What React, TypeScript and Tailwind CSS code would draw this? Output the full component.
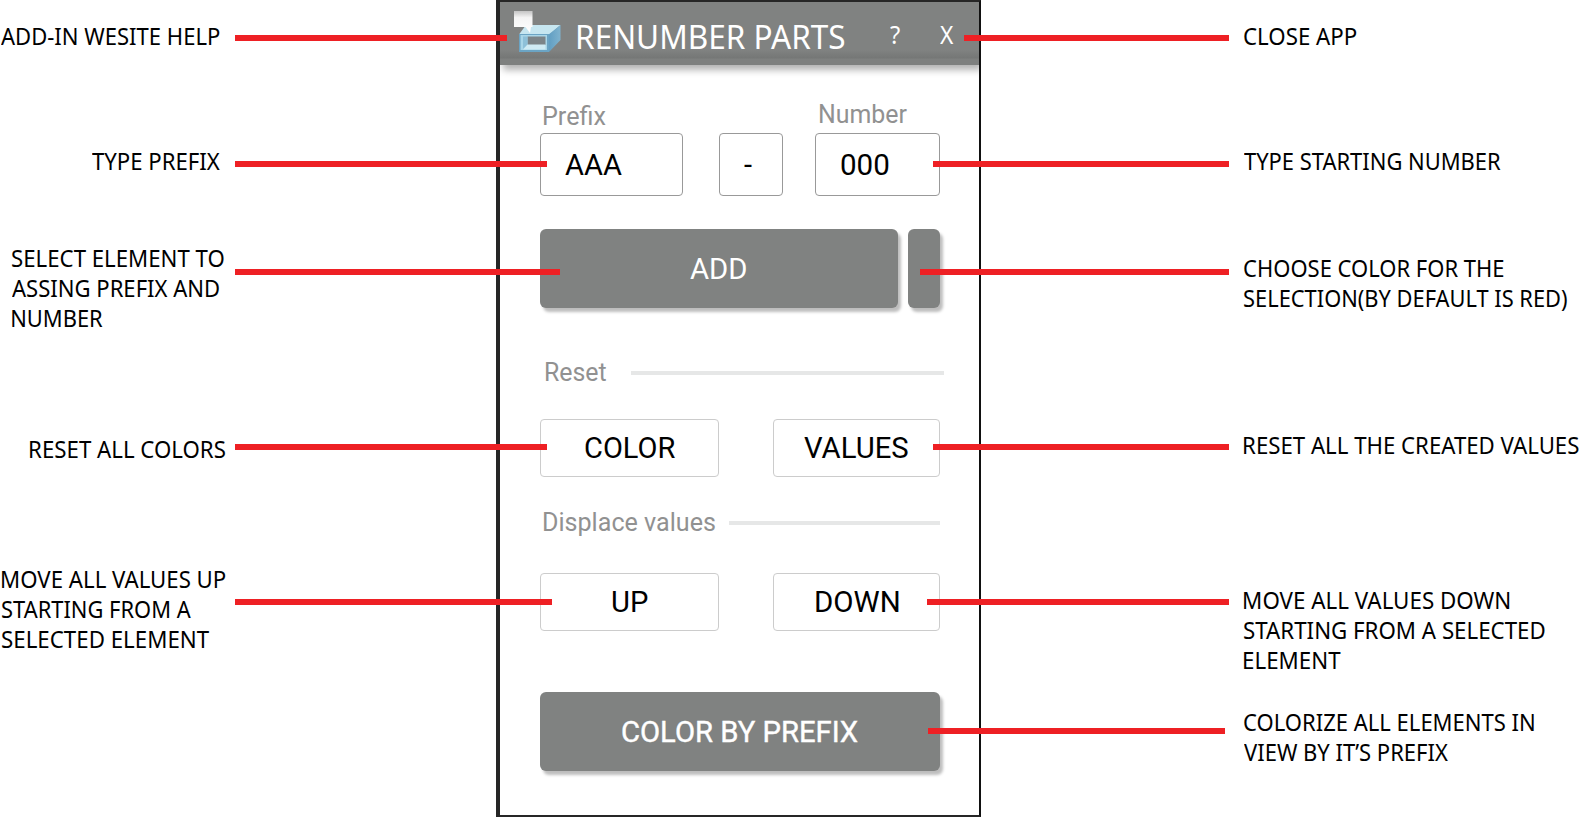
import { useLayoutEffect, useRef } from "react";
import clsx from "clsx";

const NOTO = "font-['Noto_Sans',sans-serif]";
const ROBOTO = "font-[Roboto,sans-serif]";

/** One line of text whose inked width is fitted to `width` pixels. */
function Fit({ text, width, className }: { text: string; width: number; className?: string }) {
  const ref = useRef<HTMLSpanElement>(null);
  useLayoutEffect(() => {
    const el = ref.current;
    const ctx = document.createElement("canvas").getContext("2d");
    if (!el || !ctx) return;
    const cs = getComputedStyle(el);
    ctx.font = `${cs.fontWeight} ${cs.fontSize} ${cs.fontFamily}`;
    const m = ctx.measureText(text);
    const scale = width / (m.actualBoundingBoxLeft + m.actualBoundingBoxRight);
    el.style.transform = `translateX(${m.actualBoundingBoxLeft * scale}px) scaleX(${scale})`;
  }, [text, width]);
  return (
    <span className={clsx("block h-[30px] leading-[30px] whitespace-nowrap", className)} style={{ width }}>
      <span ref={ref} className="inline-block origin-left">{text}</span>
    </span>
  );
}

type Line = [string, number];

function Note({ lines, className }: { lines: Line[]; className?: string }) {
  return (
    <div className={clsx(NOTO, "text-[23.6px] text-black", className)}>
      {lines.map(([text, width]) => (
        <Fit key={text} text={text} width={width} />
      ))}
    </div>
  );
}

function Logo() {
  return (
    <svg className="ml-[13px] mt-2 h-11 w-12 shrink-0" viewBox="0 0 48 44">
      <defs>
        <linearGradient id="bubble" x1="0" y1="0" x2="0" y2="1">
          <stop offset="0" stopColor="#c4c4c4" />
          <stop offset="0.3" stopColor="#f4f4f4" />
          <stop offset="1" stopColor="#fff" />
        </linearGradient>
        <linearGradient id="side" x1="0" y1="0" x2="1" y2="0">
          <stop offset="0" stopColor="#5f9dc2" />
          <stop offset="1" stopColor="#7fb3cf" />
        </linearGradient>
      </defs>
      <path d="M6 24.500 13 15H47.500L36 25Z" fill="#c6e6f0" />
      <path d="M35 25 47.500 15V30L36 42Z" fill="url(#side)" />
      <path d="M6 24H36V42H6Z" fill="#6ba4c4" />
      <path d="M7.500 25H34V40H7.500Z" fill="#a9d6e8" />
      <path d="M14.500 26.500H32.500V35H14.500Z" fill="#7b8488" />
      <path d="M10 26.500H14.500V35L10 39Z" fill="#8dc0d8" />
      <path d="M14.500 34.500H32.500V39.500H10Z" fill="#cfebf4" />
      <path d="M1 1H19.500V17H18L17 23 12.500 17H1Z" fill="url(#bubble)" />
    </svg>
  );
}

const outline = "flex shrink-0 items-center rounded-[4px] border bg-white text-[29px] text-black";
const solid =
  "flex h-[79px] shrink-0 items-center rounded-[6px] bg-[#808281] text-[29px] text-white shadow-[3px_4px_3px_rgba(0,0,0,0.26)]";

function Panel() {
  return (
    <main className={clsx(ROBOTO, "h-[817px] w-[485px] border-t-2 border-r-2 border-b-2 border-l-4 border-[#262626] border-r-[#111] bg-white")}>
      <header
        className={clsx(
          NOTO,
          "flex h-[63px] bg-[linear-gradient(#808281_0,#808281_48px,#757776_56px,#7e807f_57px,#7e807f_63px)] text-white shadow-[3px_5px_7px_rgba(0,0,0,0.3)] [clip-path:inset(0_0_-20px_0)]",
        )}
      >
        <Logo />
        <Fit text="RENUMBER PARTS" width={267} className="mt-[20px] ml-[17px] text-[32px]" />
        <Fit text="?" width={10} className="mt-[17px] ml-[45px] text-[26px]" />
        <Fit text="X" width={14} className="mt-[17px] ml-[40px] text-[26px]" />
      </header>

      <div className="flex pt-[34px] pl-10">
        <label className="mr-9 flex w-[143px] flex-col">
          <Fit text="Prefix" width={61.5} className="mt-[3px] mb-px ml-[4px] text-[25px] text-[#919191]" />
          <span className={clsx(outline, "h-[63px] border-[#999] pl-6")}>
            <Fit text="AAA" width={57} />
          </span>
        </label>
        <span className={clsx(outline, "mt-[34px] mr-8 h-[63px] w-16 border-[#999] pl-6")}>
          <Fit text="-" width={8} />
        </span>
        <label className="flex w-[125px] flex-col">
          <Fit text="Number" width={87.5} className="mt-px mb-[3px] ml-[5px] text-[25px] text-[#919191]" />
          <span className={clsx(outline, "h-[63px] border-[#999] pl-[25px]")}>
            <Fit text="000" width={47.5} />
          </span>
        </label>
      </div>

      <div className="mt-[33px] flex gap-[10px] pl-10">
        <button className={clsx(solid, "w-[358px] pl-[150px]")}>
          <Fit text="ADD" width={56.5} />
        </button>
        <button className={clsx(solid, "w-[32px]")} aria-label="Selection color" />
      </div>

      <div className="mt-[50px] flex pl-[46px] text-[#919191]">
        <Fit text="Reset" width={60.5} className="text-[25px]" />
        <span className="mt-[13px] ml-[24.5px] h-1 w-[313px] bg-[#e6e7e7]" />
      </div>

      <div className="mt-[31px] flex gap-[54px] pl-10">
        <button className={clsx(outline, "h-[58px] w-[179px] border-[#ccc] pl-[44px]")}>
          <Fit text="COLOR" width={90.5} />
        </button>
        <button className={clsx(outline, "h-[58px] w-[167px] border-[#ccc] pl-[29.5px]")}>
          <Fit text="VALUES" width={104.5} />
        </button>
      </div>

      <div className="mt-[31px] flex pl-[44px] text-[#919191]">
        <Fit text="Displace values" width={171} className="text-[25px]" />
        <span className="mt-[13px] ml-[14px] h-1 w-[211px] bg-[#e6e7e7]" />
      </div>

      <div className="mt-[35px] flex gap-[54px] pl-10">
        <button className={clsx(outline, "h-[58px] w-[179px] border-[#ccc] pl-[71px]")}>
          <Fit text="UP" width={36} />
        </button>
        <button className={clsx(outline, "h-[58px] w-[167px] border-[#ccc] pl-[41.5px]")}>
          <Fit text="DOWN" width={83} />
        </button>
      </div>

      <div className="mt-[61px] pl-10">
        <button className={clsx(solid, "w-[400px] pl-[82px] [-webkit-text-stroke:0.4px_white]")}>
          <Fit text="COLOR BY PREFIX" width={236} />
        </button>
      </div>
    </main>
  );
}

/** Pointer lines that run from the notes over the panel. */
const pointers = [
  "top-[34.5px] left-[234.5px] w-[272px]",
  "top-[161px] left-[234.5px] w-[312.5px]",
  "top-[269px] left-[234.5px] w-[325.5px]",
  "top-[444px] left-[234.5px] w-[312.5px]",
  "top-[599px] left-[234.5px] w-[317.5px]",
  "top-[34.5px] left-[964px] w-[265px]",
  "top-[161px] left-[932.5px] w-[296.5px]",
  "top-[269px] left-[920px] w-[309px]",
  "top-[444px] left-[932.5px] w-[296.5px]",
  "top-[599px] left-[927px] w-[302px]",
  "top-[727.5px] left-[928px] w-[297px]",
];

export default function App() {
  return (
    <div className="relative flex h-[817px] w-[1579px] overflow-hidden bg-white">
      <section className="flex w-[496px] shrink-0 flex-col pt-[21px]">
        <Note className="ml-[1px]" lines={[["ADD-IN WESITE HELP", 219]]} />
        <Note className="mt-[95px] ml-[92px]" lines={[["TYPE PREFIX", 128]]} />
        <Note
          className="mt-[67px] ml-[12px]"
          lines={[["SELECT ELEMENT TO", 211.5], ["ASSING PREFIX AND", 207], ["NUMBER", 91]]}
        />
        <Note className="mt-[101px] ml-[29.5px]" lines={[["RESET ALL COLORS", 195]]} />
        <Note
          className="mt-[100px] ml-[1.5px]"
          lines={[["MOVE ALL VALUES UP", 224], ["STARTING FROM A", 189.5], ["SELECTED ELEMENT", 207]]}
        />
      </section>

      <Panel />

      <section className="flex grow flex-col pt-[21px] pl-[262.5px]">
        <Note lines={[["CLOSE APP", 113]]} />
        <Note className="mt-[95px]" lines={[["TYPE STARTING NUMBER", 257]]} />
        <Note className="mt-[77px]" lines={[["CHOOSE COLOR FOR THE", 259.5], ["SELECTION(BY DEFAULT IS RED)", 323.5]]} />
        <Note className="mt-[117px]" lines={[["RESET ALL THE CREATED VALUES", 334.5]]} />
        <Note
          className="mt-[125px]"
          lines={[["MOVE ALL VALUES DOWN", 265.5], ["STARTING FROM A SELECTED", 300.5], ["ELEMENT", 96.5]]}
        />
        <Note className="mt-8" lines={[["COLORIZE ALL ELEMENTS IN", 290], ["VIEW BY IT’S PREFIX", 204]]} />
      </section>

      {pointers.map((p) => (
        <span key={p} className={clsx("absolute h-[6px] bg-[#ee2024]", p)} />
      ))}
    </div>
  );
}
